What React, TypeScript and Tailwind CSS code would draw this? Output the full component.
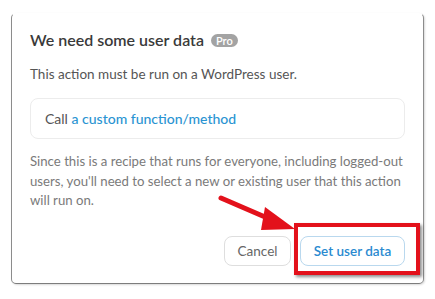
import React from "react";

const font = { fontFamily: 'Lato, "Open Sans", sans-serif' };

export default function App() {
  return (
    <div className="relative h-[299px] w-[435px] overflow-hidden bg-white" style={font}>
      <div className="pl-[11px] pt-[13px]">
        {/* Dialog card */}
        <div className="flex h-[271px] w-[413px] flex-col rounded-[5px] border-x border-b border-t border-x-[#8c8c8c] border-b-[#7d7d7d] border-t-transparent bg-white px-[18px] pt-[14px] shadow-[1px_1px_2px_rgba(0,0,0,0.15)]">
          <div className="flex items-center gap-[7px]">
            <h1 className="text-[16px] font-semibold leading-[24px] text-[#3a3a3a]">We need some user data</h1>
            <span className="rounded-full bg-[#a3a3a3] px-[5px] text-[11px] font-semibold leading-[13px] text-white">Pro</span>
          </div>
          <p className="mt-[11px] text-[13.5px] leading-[22px] text-[#555]">This action must be run on a WordPress user.</p>

          <div className="mt-[13px] flex h-[41px] items-center rounded-[8px] border border-[#ececec] px-[14px] text-[14px] text-[#555]">
            Call&nbsp;<span className="font-medium text-[#2a94d2]">a custom function/method</span>
          </div>

          <p className="mt-[13px] text-[13.2px] leading-[19.5px] text-[#7a7a7a]">
            Since this is a recipe that runs for everyone, including logged-out users, you'll need to select a new or existing user that this action will run on.
          </p>

          <div className="mt-auto mb-[17px] flex justify-end gap-[9px]">
            <button className="h-[30px] w-[67px] rounded-[8px] border border-[#dedede] bg-white text-[13.5px] text-[#666]">Cancel</button>
            <button className="h-[30px] w-[105px] rounded-[8px] border border-[#b9d8ee] bg-white text-[13.5px] font-semibold text-[#2a8ad0]">Set user data</button>
          </div>
        </div>
      </div>

      {/* Red highlight box */}
      <div className="absolute left-[294px] top-[223px] h-[52px] w-[126px] border-[4px] border-[#e3111b] shadow-[2px_2px_3px_rgba(0,0,0,0.45)]" />

      {/* Red arrow */}
      <svg className="absolute left-0 top-0" width="435" height="299" viewBox="0 0 435 299">
        <line x1="221" y1="198" x2="272" y2="220" stroke="#e3111b" strokeWidth="5" strokeLinecap="round" />
        <polygon points="295,229 265,207 261,230" fill="#e3111b" />
      </svg>
    </div>
  );
}
